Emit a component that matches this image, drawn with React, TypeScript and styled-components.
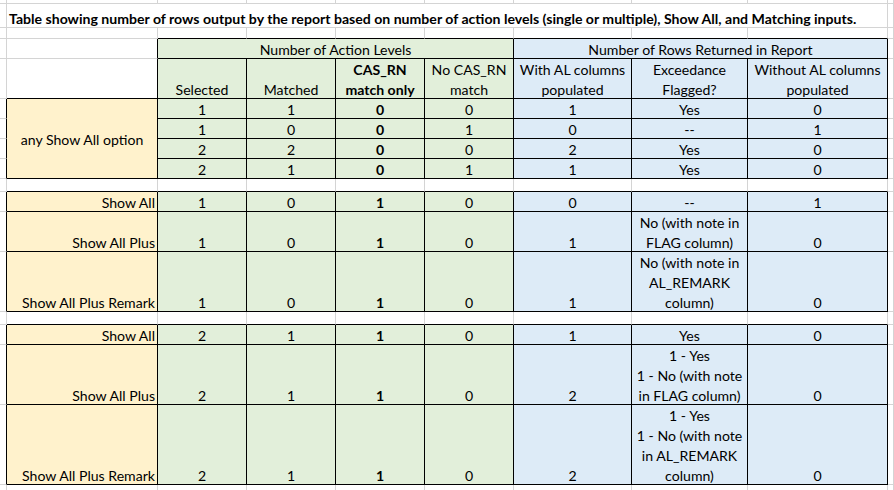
import React from 'react';
import styled, { createGlobalStyle, css } from 'styled-components';

const GRID = '#d4d4d4';
const INK = '#000000';
const CREAM = '#fff2cc';
const GREEN = '#e2efda';
const BLUE = '#ddebf7';

type Edge = 'grid' | 'ink';

const Global = createGlobalStyle`
  html, body { margin: 0; padding: 0; background: #ffffff; }
  body {
    font-family: Lato, "Open Sans", sans-serif;
    font-size: 14.1px;
    color: #000000;
  }
`;

const Sheet = styled.div`
  display: grid;
  grid-template-columns: 7px 151px 89px 89px 89px 89px 118px 116px 140px 1fr;
  grid-template-rows: 4px 24px 11px 20px 40px repeat(4, 20px) 13px 20px 40px 60px 13px 20px 60px 80px 20px;
  width: 894px;
  height: 490px;
  overflow: hidden;
`;

interface CellProps {
  $col: number;
  $row: number;
  $cols?: number;
  $rows?: number;
  $right?: Edge;
  $bottom?: Edge;
  $fill?: string;
}

const cellBase = css<CellProps>`
  grid-column: ${(p) => p.$col} / span ${(p) => p.$cols ?? 1};
  grid-row: ${(p) => p.$row} / span ${(p) => p.$rows ?? 1};
  box-sizing: border-box;
  border-right: 1px solid ${(p) => (p.$right === 'ink' ? INK : GRID)};
  border-bottom: 1px solid ${(p) => (p.$bottom === 'ink' ? INK : GRID)};
  background: ${(p) => p.$fill ?? '#ffffff'};
  min-width: 0;
  min-height: 0;
`;

const Blank = styled.div<CellProps>`
  ${cellBase}
`;

interface TextProps extends CellProps {
  $align?: 'left' | 'center' | 'right';
  $middle?: boolean;
  $bold?: boolean;
}

const TextCell = styled.div<TextProps>`
  ${cellBase}
  display: flex;
  flex-direction: column;
  justify-content: ${(p) => (p.$middle ? 'center' : 'flex-end')};
  text-align: ${(p) => p.$align ?? 'center'};
  font-weight: ${(p) => (p.$bold ? 700 : 400)};
  line-height: 20px;
  white-space: pre-line;
  padding: 0 2px;
`;

const Text = styled.span`
  display: block;
  margin-bottom: -2px;
`;

const TitleCell = styled(TextCell)`
  font-weight: 700;
  text-align: left;
  white-space: nowrap;
`;

const GroupHeader = styled(TextCell)``;
const ColumnHeader = styled(TextCell)``;
const RowLabel = styled(TextCell)``;
const ValueCell = styled(TextCell)``;

const TITLE =
  'Table showing number of rows output by the report based on number of action levels (single or multiple), Show All, and Matching inputs.';

const HEADERS = [
  'Selected',
  'Matched',
  'CAS_RN\nmatch only',
  'No CAS_RN\nmatch',
  'With AL columns\npopulated',
  'Exceedance\nFlagged?',
  'Without AL columns\npopulated',
];

type Row = (string | number)[];

const SECTION_ONE: Row[] = [
  [1, 1, 0, 0, 1, 'Yes', 0],
  [1, 0, 0, 1, 0, '--', 1],
  [2, 2, 0, 0, 2, 'Yes', 0],
  [2, 1, 0, 1, 1, 'Yes', 0],
];

const SECTION_TWO: { label: string; values: Row }[] = [
  { label: 'Show All', values: [1, 0, 1, 0, 0, '--', 1] },
  { label: 'Show All Plus', values: [1, 0, 1, 0, 1, 'No (with note in\nFLAG column)', 0] },
  { label: 'Show All Plus Remark', values: [1, 0, 1, 0, 1, 'No (with note in\nAL_REMARK\ncolumn)', 0] },
];

const SECTION_THREE: { label: string; values: Row }[] = [
  { label: 'Show All', values: [2, 1, 1, 0, 1, 'Yes', 0] },
  { label: 'Show All Plus', values: [2, 1, 1, 0, 2, '1 - Yes\n1 - No (with note\nin FLAG column)', 0] },
  {
    label: 'Show All Plus Remark',
    values: [2, 1, 1, 0, 2, '1 - Yes\n1 - No (with note\nin AL_REMARK\ncolumn)', 0],
  },
];

const fillFor = (col: number) => (col <= 6 ? GREEN : BLUE);

export default function App() {
  const cells: React.ReactNode[] = [];
  let key = 0;

  const blank = (col: number, row: number, right: Edge, bottom: Edge) => {
    cells.push(<Blank key={key++} $col={col} $row={row} $right={right} $bottom={bottom} />);
  };

  const values = (row: number, data: Row) => {
    data.forEach((v, i) => {
      const col = i + 3;
      cells.push(
        <ValueCell
          key={key++}
          $col={col}
          $row={row}
          $right="ink"
          $bottom="ink"
          $fill={fillFor(col)}
          $bold={col === 5}
        >
          <Text>{String(v)}</Text>
        </ValueCell>
      );
    });
  };

  const spacerRow = (row: number, bottom: Edge) => {
    blank(1, row, 'grid', 'grid');
    for (let c = 2; c <= 9; c++) blank(c, row, 'grid', bottom);
    blank(10, row, 'grid', 'grid');
  };

  // row 1: top sliver
  for (let c = 1; c <= 10; c++) blank(c, 1, 'grid', 'grid');

  // row 2: title
  blank(1, 2, 'grid', 'grid');
  cells.push(
    <TitleCell key={key++} $col={2} $cols={8} $row={2} $right="grid" $bottom="grid">
      <Text>{TITLE}</Text>
    </TitleCell>
  );
  blank(10, 2, 'grid', 'grid');

  // row 3: empty row above the table
  blank(1, 3, 'grid', 'grid');
  blank(2, 3, 'grid', 'grid');
  for (let c = 3; c <= 9; c++) blank(c, 3, 'grid', 'ink');
  blank(10, 3, 'grid', 'grid');

  // row 4: group headers
  blank(1, 4, 'grid', 'grid');
  blank(2, 4, 'ink', 'grid');
  cells.push(
    <GroupHeader key={key++} $col={3} $cols={4} $row={4} $right="ink" $bottom="ink" $fill={GREEN}>
      <Text>Number of Action Levels</Text>
    </GroupHeader>
  );
  cells.push(
    <GroupHeader key={key++} $col={7} $cols={3} $row={4} $right="ink" $bottom="ink" $fill={BLUE}>
      <Text>Number of Rows Returned in Report</Text>
    </GroupHeader>
  );
  blank(10, 4, 'grid', 'grid');

  // row 5: column headers
  blank(1, 5, 'grid', 'grid');
  blank(2, 5, 'ink', 'ink');
  HEADERS.forEach((h, i) => {
    const col = i + 3;
    cells.push(
      <ColumnHeader
        key={key++}
        $col={col}
        $row={5}
        $right="ink"
        $bottom="ink"
        $fill={fillFor(col)}
        $bold={col === 5}
      >
        <Text>{h}</Text>
      </ColumnHeader>
    );
  });
  blank(10, 5, 'grid', 'grid');

  // rows 6-9: any show all option
  cells.push(
    <RowLabel key={key++} $col={2} $row={6} $rows={4} $right="ink" $bottom="ink" $fill={CREAM} $middle>
      <Text>any Show All option</Text>
    </RowLabel>
  );
  SECTION_ONE.forEach((r, i) => {
    const row = 6 + i;
    blank(1, row, 'ink', 'grid');
    values(row, r);
    blank(10, row, 'grid', 'grid');
  });

  spacerRow(10, 'ink');

  const labelled = (start: number, list: { label: string; values: Row }[]) => {
    list.forEach((r, i) => {
      const row = start + i;
      blank(1, row, 'ink', 'grid');
      cells.push(
        <RowLabel key={key++} $col={2} $row={row} $right="ink" $bottom="ink" $fill={CREAM} $align="right">
          <Text>{r.label}</Text>
        </RowLabel>
      );
      values(row, r.values);
      blank(10, row, 'grid', 'grid');
    });
  };

  labelled(11, SECTION_TWO);
  spacerRow(14, 'ink');
  labelled(15, SECTION_THREE);
  spacerRow(18, 'grid');

  return (
    <>
      <Global />
      <Sheet>{cells}</Sheet>
    </>
  );
}
